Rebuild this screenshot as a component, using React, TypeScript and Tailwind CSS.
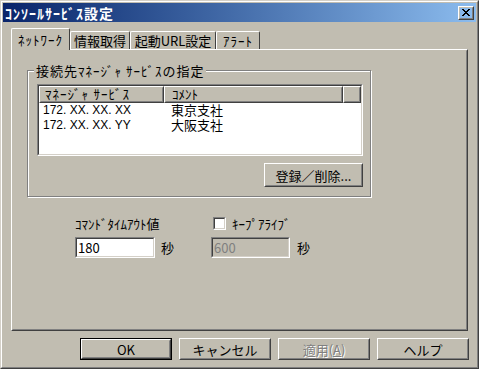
import type { ReactNode } from 'react';

// classic win2000 style dialog
function Raised({ className = '', children }: { className?: string; children?: ReactNode }) {
  return (
    <div className={`border border-t-white border-l-white border-r-[#404040] border-b-[#404040] ${className}`}>
      <div className="flex h-full w-full items-center justify-center border border-t-[#c1bdb1] border-l-[#c1bdb1] border-r-[#808080] border-b-[#808080]">
        {children}
      </div>
    </div>
  );
}

function Sunken({ className = '', inner = '', children }: { className?: string; inner?: string; children?: ReactNode }) {
  return (
    <div className={`border border-t-[#808080] border-l-[#808080] border-r-white border-b-white ${className}`}>
      <div className={`h-full w-full border border-t-[#404040] border-l-[#404040] border-r-[#d4d0c8] border-b-[#d4d0c8] ${inner}`}>
        {children}
      </div>
    </div>
  );
}

function CloseGlyph() {
  const rows = ['11000011', '01100110', '00111100', '00011000', '00111100', '01100110', '11000011'];
  return (
    <svg width="8" height="7" viewBox="0 0 8 7" shapeRendering="crispEdges">
      {rows.map((r, y) =>
        r.split('').map((c, x) => (c === '1' ? <rect key={`${x}-${y}`} x={x} y={y} width="1" height="1" fill="#000" /> : null)),
      )}
    </svg>
  );
}

const tabs = [
  { label: 'ﾈｯﾄﾜｰｸ', active: true, cls: 'w-[59px] h-[22px] tracking-[1px]' },
  { label: '情報取得', active: false, cls: 'w-[60px] h-[18px]' },
  { label: '起動URL設定', active: false, cls: 'w-[86px] h-[18px]' },
  { label: 'ｱﾗｰﾄ', active: false, cls: 'w-[44px] h-[18px] tracking-[1px]' },
];

const rows = [
  { addr: '172. XX. XX. XX', note: '東京支社' },
  { addr: '172. XX. XX. YY', note: '大阪支社' },
];

const listFont = "font-['Liberation_Sans','Noto_Sans_CJK_JP',sans-serif]";

export default function App() {
  return (
    <div className="w-[479px] h-[369px] font-['Noto_Sans_CJK_JP','Noto_Sans',sans-serif] text-[13px] text-black">
      <div className="h-full w-full border border-t-[#d4d0c8] border-l-[#d4d0c8] border-r-[#404040] border-b-[#404040]">
        <div className="flex h-full w-full flex-col border border-t-white border-l-white border-r-[#808080] border-b-[#808080] bg-[#c1bdb1] p-px">
          {/* title bar */}
          <div className="flex h-[19px] items-center justify-between bg-linear-to-r from-[#0a246a] to-[#8cbcee] px-[2px]">
            <span className="text-[14px] font-bold leading-none tracking-[1px] text-white">ｺﾝｿｰﾙｻｰﾋﾞｽ設定</span>
            <Raised className="h-[14px] w-[16px]">
              <CloseGlyph />
            </Raised>
          </div>

          {/* tabs */}
          <div className="mt-[6px] flex h-[21px] items-end pl-[8px]">
            {tabs.map((t) =>
              t.active ? (
                <div
                  key={t.label}
                  className={`relative z-10 -mb-px flex items-center justify-center rounded-t-[2px] border-t border-l border-r border-t-white border-l-white border-r-[#404040] bg-[#c1bdb1] ${t.cls}`}
                >
                  <span className="leading-none">{t.label}</span>
                </div>
              ) : (
                <div
                  key={t.label}
                  className={`flex items-center justify-center rounded-t-[2px] border-t border-l border-r border-t-white border-l-white border-r-[#404040] ${t.cls}`}
                >
                  <span className="leading-none">{t.label}</span>
                </div>
              ),
            )}
          </div>

          {/* tab page */}
          <div className="mx-[8px] h-[282px] border border-t-white border-l-white border-r-[#404040] border-b-[#404040]">
            <div className="h-full w-full border border-t-[#c1bdb1] border-l-[#c1bdb1] border-r-[#808080] border-b-[#808080]">
              {/* group box */}
              <div className="relative ml-[14px] mt-[19px] h-[127px] w-[344px] border border-[#808080] shadow-[inset_1px_1px_0_white,1px_1px_0_white]">
                <span className="absolute -top-[8px] left-[6px] bg-[#c1bdb1] px-[2px] leading-[15px] tracking-[1px]">
                  接続先ﾏﾈｰｼﾞｬ ｻｰﾋﾞｽの指定
                </span>
                <div className="ml-[9px] mt-[13px] flex w-[326px] flex-col items-end">
                  <Sunken className={`h-[72px] w-[326px] ${listFont}`} inner="bg-white flex flex-col">
                    <div className="flex h-[17px] bg-[#c1bdb1]">
                      <Raised className="w-[125px]">
                        <span className="w-full pl-[4px] leading-none tracking-[1px]">ﾏﾈｰｼﾞｬ ｻｰﾋﾞｽ</span>
                      </Raised>
                      <Raised className="w-[179px]">
                        <span className="w-full pl-[6px] leading-none">ｺﾒﾝﾄ</span>
                      </Raised>
                      <Raised className="flex-1" />
                    </div>
                    {rows.map((r) => (
                      <div key={r.addr} className="flex h-[15px] items-center leading-[15px]">
                        <span className="w-[125px] pl-[4px] text-[12px]">{r.addr}</span>
                        <span className="pl-[7px]">{r.note}</span>
                      </div>
                    ))}
                  </Sunken>
                  <Raised className="mt-[7px] h-[24px] w-[99px]">
                    <span className="leading-none">登録／削除...</span>
                  </Raised>
                </div>
              </div>

              {/* timeout / keepalive */}
              <div className="ml-[62px] mt-[19px] flex">
                <div className="w-[136px]">
                  <div className="h-[15px] leading-[15px]">ｺﾏﾝﾄﾞﾀｲﾑｱｳﾄ値</div>
                  <div className="mt-[6px] flex items-center gap-[6px]">
                    <Sunken className="h-[21px] w-[80px]" inner="bg-white flex items-center pl-[1px]">
                      <span className="leading-none">180</span>
                    </Sunken>
                    <span className="leading-none">秒</span>
                  </div>
                </div>
                <div>
                  <div className="flex h-[15px] items-center gap-[6px] pl-[2px]">
                    <Sunken className="h-[13px] w-[13px]" inner="bg-white" />
                    <span className="leading-[15px]">ｷｰﾌﾟｱﾗｲﾌﾞ</span>
                  </div>
                  <div className="mt-[6px] flex items-center gap-[7px]">
                    <Sunken className="h-[21px] w-[79px]" inner="bg-[#c1bdb1] flex items-center pl-[1px]">
                      <span className="leading-none text-[#808080]">600</span>
                    </Sunken>
                    <span className="leading-none">秒</span>
                  </div>
                </div>
              </div>
            </div>
          </div>

          {/* dialog buttons */}
          <div className="mt-[7px] flex h-[22px] justify-end gap-[7px] pr-[7px]">
            <div className="h-full w-[92px] border border-black">
              <Raised className="h-full w-full">
                <span className="leading-none">OK</span>
              </Raised>
            </div>
            <Raised className="h-full w-[92px]">
              <span className="leading-none">キャンセル</span>
            </Raised>
            <Raised className="h-full w-[92px]">
              <span className="leading-none text-[#808080] [text-shadow:1px_1px_0_white]">
                適用(<u>A</u>)
              </span>
            </Raised>
            <Raised className="h-full w-[92px]">
              <span className="leading-none">ヘルプ</span>
            </Raised>
          </div>
        </div>
      </div>
    </div>
  );
}
